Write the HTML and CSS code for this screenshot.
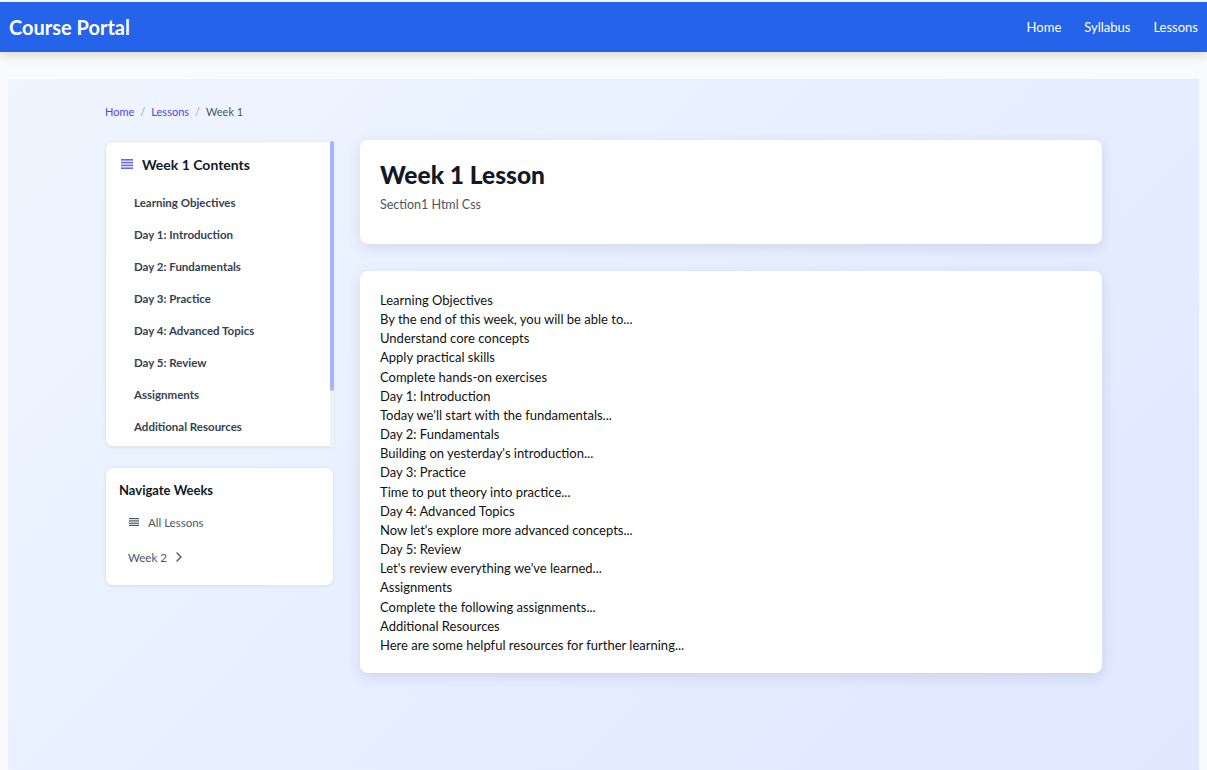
FILE: index.html
```html
<!DOCTYPE html>
<html lang="en">
<head>
<meta charset="utf-8">
<title>Week 1 Lesson</title>
<link rel="stylesheet" href="styles.css">
</head>
<body>
<header class="topbar">
  <div class="brand">Course Portal</div>
  <nav class="topnav">
    <a href="#">Home</a>
    <a href="#">Syllabus</a>
    <a href="#">Lessons</a>
  </nav>
</header>
<div class="page">
  <main class="main">
    <div class="container">
      <div class="crumbs">
        <a href="#">Home</a><span class="sep">/</span><a href="#">Lessons</a><span class="sep">/</span><span class="current">Week 1</span>
      </div>
      <div class="layout">
        <aside class="sidebar">
          <div class="toc-wrap">
            <div class="card toc">
              <div class="toc-title">
                <svg class="toc-icon" width="12" height="10" viewBox="0 0 12 10"><rect x="0" y="0" width="12" height="1.6" fill="#6366f1"/><rect x="0" y="2.8" width="12" height="1.6" fill="#6366f1"/><rect x="0" y="5.6" width="12" height="1.6" fill="#6366f1"/><rect x="0" y="8.4" width="12" height="1.6" fill="#6366f1"/></svg>
                <span>Week 1 Contents</span>
              </div>
              <ul class="toc-list">
                <li><a href="#">Learning Objectives</a></li>
                <li><a href="#">Day 1: Introduction</a></li>
                <li><a href="#">Day 2: Fundamentals</a></li>
                <li><a href="#">Day 3: Practice</a></li>
                <li><a href="#">Day 4: Advanced Topics</a></li>
                <li><a href="#">Day 5: Review</a></li>
                <li><a href="#">Assignments</a></li>
                <li><a href="#">Additional Resources</a></li>
              </ul>
            </div>
            <div class="scroll-track"><div class="scroll-thumb"></div></div>
          </div>
          <div class="card weeks">
            <div class="weeks-title">Navigate Weeks</div>
            <a class="all-lessons" href="#">
              <svg width="10" height="8" viewBox="0 0 10 8"><rect x="0" y="0" width="10" height="1.2" fill="#4b5563"/><rect x="0" y="2.3" width="10" height="1.2" fill="#4b5563"/><rect x="0" y="4.6" width="10" height="1.2" fill="#4b5563"/><rect x="0" y="6.8" width="10" height="1.2" fill="#4b5563"/></svg>
              <span>All Lessons</span>
            </a>
            <a class="next-week" href="#">
              <span>Week 2</span>
              <svg width="6" height="10" viewBox="0 0 6 10"><path d="M1 1l4 4-4 4" fill="none" stroke="#4b5563" stroke-width="1.3" stroke-linecap="round" stroke-linejoin="round"/></svg>
            </a>
          </div>
        </aside>
        <section class="content">
          <div class="panel head-panel">
            <h1>Week 1 Lesson</h1>
            <p class="subtitle">Section1 Html Css</p>
          </div>
          <div class="panel body-panel">
            <div>Learning Objectives</div>
            <div>By the end of this week, you will be able to...</div>
            <div>Understand core concepts</div>
            <div>Apply practical skills</div>
            <div>Complete hands-on exercises</div>
            <div>Day 1: Introduction</div>
            <div>Today we'll start with the fundamentals...</div>
            <div>Day 2: Fundamentals</div>
            <div>Building on yesterday's introduction...</div>
            <div>Day 3: Practice</div>
            <div>Time to put theory into practice...</div>
            <div>Day 4: Advanced Topics</div>
            <div>Now let's explore more advanced concepts...</div>
            <div>Day 5: Review</div>
            <div>Let's review everything we've learned...</div>
            <div>Assignments</div>
            <div>Complete the following assignments...</div>
            <div>Additional Resources</div>
            <div>Here are some helpful resources for further learning...</div>
          </div>
        </section>
      </div>
    </div>
  </main>
</div>
</body>
</html>
```
FILE: styles.css
```css
* { box-sizing: border-box; }
html, body { margin: 0; padding: 0; }
body {
  background: #f9fafb;
  font-family: Lato, "Noto Sans", Arial, sans-serif;
  color: #111827;
  padding-top: 2px;
  overflow: hidden;
}
a { text-decoration: none; color: inherit; }

.topbar {
  height: 50px;
  background: #2563eb;
  display: flex;
  align-items: center;
  justify-content: space-between;
  padding: 0 9px;
  box-shadow: 0 4px 10px rgba(0,0,0,0.12);
  position: relative;
  z-index: 2;
}
.brand { color: #fff; font-weight: 700; font-size: 20px; }
.topnav { display: flex; gap: 23px; }
.topnav a { color: #fff; font-size: 13px; }

.page { padding: 27px 8px 0; }
.main {
  background: linear-gradient(135deg, #eff6ff 0%, #e0e7ff 100%);
  min-height: 700px;
  padding: 22px 0 60px;
}
.container { width: 997px; margin: 0 auto; }

.crumbs { font-size: 11px; color: #4b5563; display: flex; align-items: center; height: 21px; }
.crumbs a { color: #4f46e5; }
.crumbs .sep { color: #9ca3af; margin: 0 6px; }
.crumbs .current { color: #4b5563; }

.layout { display: flex; gap: 26px; margin-top: 19px; align-items: flex-start; }
.sidebar { width: 229px; flex: none; display: flex; flex-direction: column; gap: 20px; }

.card {
  background: #fff;
  border: 1px solid #e5e7eb;
  border-radius: 8px;
  box-shadow: 0 1px 3px rgba(0,0,0,0.06);
}
.toc-wrap { position: relative; height: 306px; }
.toc {
  height: 306px;
  overflow: hidden;
  padding: 11px 0 0 14px;
  border-top-right-radius: 0;
  border-bottom-right-radius: 0;
}
.scroll-track {
  position: absolute;
  top: 0; right: 0; bottom: 0;
  width: 4px;
  background: #f1f1f4;
}
.scroll-thumb { height: 250px; background: #a5b4fc; border-radius: 2px; }
.toc-title { display: flex; align-items: center; gap: 9px; font-size: 14px; font-weight: 700; color: #111827; height: 22px; }
.toc-title svg { flex: none; margin-left: 1px; }
.toc-list { list-style: none; margin: 11px 0 0; padding: 0 0 0 14px; }
.toc-list li a { display: flex; align-items: center; height: 32px; font-size: 11.5px; font-weight: 700; color: #374151; }

.weeks { padding: 12px 13px 12px; }
.weeks-title { font-size: 13px; font-weight: 700; color: #111827; height: 20px; display: flex; align-items: center; }
.all-lessons { display: flex; align-items: center; gap: 9px; padding: 0 10px; height: 32px; margin-top: 6px; font-size: 11.5px; color: #4b5563; }
.next-week { display: flex; align-items: center; gap: 9px; padding: 0 9px; height: 32px; margin-top: 3px; font-size: 11.5px; color: #4b5563; }

.content { flex: 1; display: flex; flex-direction: column; gap: 27px; }
.panel {
  background: #fff;
  border-radius: 8px;
  box-shadow: 0 4px 14px rgba(30,41,90,0.12);
  padding: 20px;
}
.head-panel { height: 104px; margin-top: -1px; padding-top: 20px; }
.head-panel h1 { margin: 0; font-size: 24.5px; font-weight: 900; color: #111827; line-height: 30px; }
.subtitle { margin: 7px 0 0; font-size: 12.5px; color: #4b5563; }
.body-panel { padding: 20px 20px 18px; font-size: 13px; color: #111; }
.body-panel div { line-height: 19.15px; }
```
